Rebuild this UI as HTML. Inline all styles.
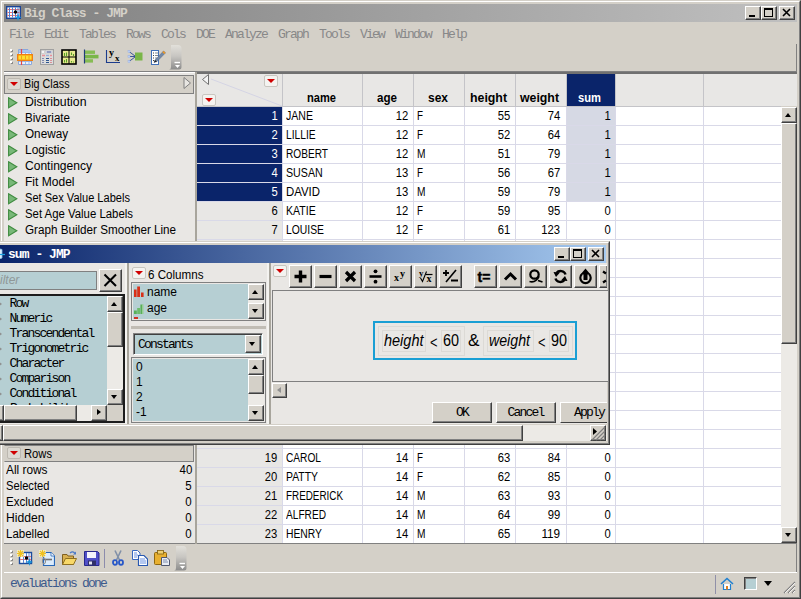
<!DOCTYPE html>
<html><head><meta charset="utf-8"><title>Big Class - JMP</title>
<style>
*{box-sizing:border-box;margin:0;padding:0}
html,body{width:801px;height:599px;overflow:hidden;background:#d4d0c8}
body{position:relative;font-family:"Liberation Sans",sans-serif;font-size:12px;color:#000}
.a{position:absolute}
.mono{font-family:"Liberation Mono",monospace;font-size:13px;letter-spacing:-1.8px;white-space:pre}
.t{position:absolute;white-space:pre;line-height:16px;height:16px}
.r{text-align:right}
.btn{position:absolute;background:#d4d0c8;border:1px solid;border-color:#fff #404040 #404040 #fff;box-shadow:inset -1px -1px 0 #808080}
.sunk{position:absolute;border:1px solid;border-color:#808080 #fff #fff #808080;box-shadow:inset 1px 1px 0 #404040}
.rt{position:absolute;width:14px;height:12px;border:1px solid #bcb8b0;border-radius:2px;background:#dcd9d2}
.rt.w{background:#f4f3f0;border-color:#c8c6c0}
.rt:after{content:"";position:absolute;left:1.5px;top:2.5px;width:0;height:0;border-style:solid;border-color:#d00000 transparent transparent transparent;border-width:4.5px 4.5px 0 4.5px}

.arr{position:absolute;width:0;height:0;border-style:solid}
</style></head><body>
<div class="a" style="left:0px;top:0px;width:801px;height:599px;border:1px solid;border-color:#d4d0c8 #404040 #404040 #d4d0c8"></div>
<div class="a" style="left:1px;top:1px;width:799px;height:597px;border:1px solid;border-color:#fff #808080 #808080 #fff"></div>
<div class="a" style="left:4px;top:4px;width:793px;height:18px;background:linear-gradient(90deg,#808080,#c0c0c0)"></div>
<svg class="a" style="left:6px;top:5px" width="16" height="16" viewBox="0 0 16 16"><rect x="0.7" y="1.700" width="13.600" height="11.600" fill="#fff" stroke="#1c4496" stroke-width="1.4"/><path d="M1.500 4.500H13.500M1.500 7.500H13.500M1.500 10.500H13.500" stroke="#f07070" stroke-width="1"/><path d="M3.500 2.500V12.500M6.500 2.500V12.500M9.500 2.500V12.500M12 2.500V12.500" stroke="#5080d0" stroke-width="1"/><circle cx="9.500" cy="7" r="1.700" fill="#000"/><path d="M12 8L13 11.500L16 12.300L13 13.100L12 16L11 13.100L8.500 12.300L11 11.500Z" fill="#1898e0"/></svg>
<div class="t mono" style="left:24px;top:6px;font-weight:bold;color:#d4d0c8;letter-spacing:-0.95px">Big Class - JMP</div>
<div class="btn" style="left:745px;top:6px;width:16px;height:14px;"></div>
<div class="a" style="left:749px;top:15px;width:6px;height:2px;background:#000"></div>
<div class="btn" style="left:761px;top:6px;width:16px;height:14px;"></div>
<div class="a" style="left:764px;top:8px;width:9px;height:9px;border:1px solid #000;border-top-width:2px"></div>
<div class="btn" style="left:779px;top:6px;width:16px;height:14px;"></div>
<svg class="a" style="left:782px;top:8px" width="10" height="10" viewBox="0 0 10 10"><path d="M1 1L8 8M8 1L1 8" stroke="#000" stroke-width="1.6"/></svg>
<div class="t mono" style="left:9px;top:27px;color:#888">File</div>
<div class="t mono" style="left:44px;top:27px;color:#888">Edit</div>
<div class="t mono" style="left:79px;top:27px;color:#888">Tables</div>
<div class="t mono" style="left:126px;top:27px;color:#888">Rows</div>
<div class="t mono" style="left:161px;top:27px;color:#888">Cols</div>
<div class="t mono" style="left:196px;top:27px;color:#888">DOE</div>
<div class="t mono" style="left:225px;top:27px;color:#888">Analyze</div>
<div class="t mono" style="left:278px;top:27px;color:#888">Graph</div>
<div class="t mono" style="left:319px;top:27px;color:#888">Tools</div>
<div class="t mono" style="left:360px;top:27px;color:#888">View</div>
<div class="t mono" style="left:395px;top:27px;color:#888">Window</div>
<div class="t mono" style="left:442px;top:27px;color:#888">Help</div>
<div class="a" style="left:10px;top:49px;width:2px;height:2px;background:#fff;box-shadow:1px 1px 0 #8a8a8a"></div>
<div class="a" style="left:10px;top:53px;width:2px;height:2px;background:#fff;box-shadow:1px 1px 0 #8a8a8a"></div>
<div class="a" style="left:10px;top:57px;width:2px;height:2px;background:#fff;box-shadow:1px 1px 0 #8a8a8a"></div>
<div class="a" style="left:10px;top:61px;width:2px;height:2px;background:#fff;box-shadow:1px 1px 0 #8a8a8a"></div>
<svg class="a" style="left:17px;top:49px" width="16" height="16" viewBox="0 0 16 16"><path d="M1.5 0.5H11L14.5 4V15.5H1.5Z" fill="#eaf2fc" stroke="#8aa8dc"/><path d="M2 3.5H14M2 12.5H14M8.5 1V15M12 4V15" stroke="#9cb8e8"/><rect x="2" y="1" width="12" height="2" fill="#a8c4f0"/><path d="M4.5 0V16" stroke="#e84848" stroke-width="1.2"/><rect x="0.7" y="5.7" width="14.6" height="5.6" fill="#ffe030" stroke="#f08010" stroke-width="1.4"/><path d="M4.5 6.5V10.5M8.5 6.5V10.5M12 6.5V10.5" stroke="#f0a020"/></svg>
<svg class="a" style="left:39px;top:49px" width="16" height="16" viewBox="0 0 16 16"><rect x="1.5" y="0.5" width="13" height="15" fill="#dcdcdc" stroke="#a0a0a0"/><rect x="2.5" y="1.5" width="3" height="3" fill="#f4f4f4" stroke="#b8b8b8" stroke-width="0.5"/><rect x="6.5" y="1.5" width="7" height="3" fill="#fff" stroke="#b8b8b8" stroke-width="0.5"/><path d="M7.5 3H12.5" stroke="#283880" stroke-width="1"/><path d="M3 6.5H6M11 6.5H13" stroke="#e89098" stroke-width="1.4"/><path d="M7 6.5H10" stroke="#98b0d8" stroke-width="1.4"/><path d="M3.5 9.5h1M3.5 11.5h1M3.5 13.5h1" stroke="#283880" stroke-width="1.2"/><path d="M7 9.5h3M7 11.5h3M7 13.5h3" stroke="#305890" stroke-width="1.2"/><path d="M11.5 9.5h1M11.5 11.5h1M11.5 13.5h1" stroke="#d84050" stroke-width="1.2"/></svg>
<svg class="a" style="left:61px;top:49px" width="16" height="16" viewBox="0 0 16 16"><rect x="1" y="1" width="14" height="14" fill="#eaea90" stroke="#000" stroke-width="1.6"/><path d="M8 1V15M1 8H15" stroke="#000" stroke-width="1"/><path d="M3.5 4v3M5.5 3.5v3.5M10.5 3.5v2.5M12.5 5v2M3.5 11v2.5M5.5 10v3.5M10.5 12v1.5M12.5 12.5v1" stroke="#58a028" stroke-width="1.1"/></svg>
<svg class="a" style="left:83px;top:49px" width="16" height="16" viewBox="0 0 16 16"><rect x="2" y="1.5" width="10" height="3.4" fill="#86bc54"/><rect x="2" y="5.8" width="13.5" height="3.6" fill="#7ab648"/><rect x="2" y="10.2" width="8" height="3.4" fill="#86bc54"/><path d="M1.5 0.5V14.5" stroke="#203c78" stroke-width="1.2"/></svg>
<svg class="a" style="left:105px;top:49px" width="16" height="16" viewBox="0 0 16 16"><path d="M1.5 1V13.5H15" stroke="#1c3c8c" fill="none" stroke-width="1.1"/><text x="4" y="6.5" font-family="Liberation Serif,serif" font-weight="bold" font-size="10" fill="#000">y</text><text x="10" y="12" font-family="Liberation Serif,serif" font-weight="bold" font-size="9" fill="#000">x</text></svg>
<svg class="a" style="left:127px;top:49px" width="16" height="16" viewBox="0 0 16 16"><path d="M2 2.5L8 7M2 7.5H8M2 12.5L8 8" stroke="#284890" fill="none" stroke-width="0.9"/><rect x="8" y="3.5" width="7.5" height="8" fill="#7ab648"/><rect x="1" y="1.5" width="2" height="2" fill="#c0d4f8" stroke="#90a8e0" stroke-width="0.4"/><rect x="1" y="6.5" width="2" height="2" fill="#c0d4f8" stroke="#90a8e0" stroke-width="0.4"/><rect x="1" y="11.5" width="2" height="2" fill="#c0d4f8" stroke="#90a8e0" stroke-width="0.4"/></svg>
<svg class="a" style="left:150px;top:49px" width="16" height="16" viewBox="0 0 16 16"><rect x="1.5" y="1.5" width="7" height="14" fill="#fff" stroke="#4070b8"/><path d="M3 4h1M3 6.5h1M3 9h1M3 11.5h1" stroke="#404040"/><path d="M5 4h3M5 6.5h3M5 9h2" stroke="#808890"/><path d="M4 13.5L5 11L13.5 2L15.5 3.8L7 12.6Z" fill="#7088a8" stroke="#506080" stroke-width="0.5"/><path d="M13.5 2L15.5 3.8L14.3 5L12.3 3.2Z" fill="#f09820"/><path d="M4 13.5L5 11L7 12.6Z" fill="#202020"/></svg>
<svg class="a" style="left:169px;top:45px" width="13" height="25" viewBox="0 0 13 25"><defs><linearGradient id="tb169" x1="0" y1="0" x2="0" y2="1"><stop offset="0" stop-color="#e2e0da"/><stop offset="0.45" stop-color="#c8c6c2"/><stop offset="1" stop-color="#8c8c8c"/></linearGradient></defs><path d="M0 0H9Q12.500 0 12.500 3.500V22Q12.500 24.500 10 24.500H0Q2 24.500 2 22V0Z" fill="url(#tb169)"/><path d="M5.500 17.500H11" stroke="#fff" stroke-width="1.4"/><path d="M6 20H11L8.500 23Z" fill="#fff"/></svg>
<div class="a" style="left:4px;top:71px;width:793px;height:1px;background:#808080"></div>
<div class="a" style="left:4px;top:72px;width:193px;height:2px;background:#fff"></div>
<div class="a" style="left:197px;top:72px;width:600px;height:2px;background:#707070"></div>
<div class="a" style="left:796px;top:44px;width:1px;height:27px;background:#808080"></div>
<div class="a" style="left:796px;top:544px;width:1px;height:28px;background:#808080"></div>
<div class="a" style="left:4px;top:73px;width:191px;height:171px;background:#e9e7e4"></div>
<div class="a" style="left:4px;top:75px;width:190px;height:19px;background:#d4d0c8;border:1px solid #808080"></div>
<div class="rt" style="left:7px;top:78px"></div>
<div class="t" style="left:23.5px;top:76px;transform:scaleX(0.898);transform-origin:0 0;">Big Class</div>
<svg class="a" style="left:183px;top:76px" width="9" height="14" viewBox="0 0 9 14"><path d="M1 1.5L7.5 7L1 12.5Z" fill="#e8e6e2" stroke="#808080" stroke-width="1"/></svg>
<svg class="a" style="left:8px;top:97px" width="10" height="12" viewBox="0 0 10 12"><path d="M0.6 0.8L8.8 5.75L0.6 10.7Z" fill="#78b878" stroke="#408c40" stroke-width="1.1"/></svg>
<div class="t" style="left:25px;top:94px;transform:scaleX(1.024);transform-origin:0 0;">Distribution</div>
<svg class="a" style="left:8px;top:113px" width="10" height="12" viewBox="0 0 10 12"><path d="M0.6 0.8L8.8 5.75L0.6 10.7Z" fill="#78b878" stroke="#408c40" stroke-width="1.1"/></svg>
<div class="t" style="left:25px;top:110px;transform:scaleX(0.964);transform-origin:0 0;">Bivariate</div>
<svg class="a" style="left:8px;top:129px" width="10" height="12" viewBox="0 0 10 12"><path d="M0.6 0.8L8.8 5.75L0.6 10.7Z" fill="#78b878" stroke="#408c40" stroke-width="1.1"/></svg>
<div class="t" style="left:25px;top:126px;transform:scaleX(0.977);transform-origin:0 0;">Oneway</div>
<svg class="a" style="left:8px;top:145px" width="10" height="12" viewBox="0 0 10 12"><path d="M0.6 0.8L8.8 5.75L0.6 10.7Z" fill="#78b878" stroke="#408c40" stroke-width="1.1"/></svg>
<div class="t" style="left:25px;top:142px;transform:scaleX(0.995);transform-origin:0 0;">Logistic</div>
<svg class="a" style="left:8px;top:161px" width="10" height="12" viewBox="0 0 10 12"><path d="M0.6 0.8L8.8 5.75L0.6 10.7Z" fill="#78b878" stroke="#408c40" stroke-width="1.1"/></svg>
<div class="t" style="left:25px;top:158px;transform:scaleX(1.004);transform-origin:0 0;">Contingency</div>
<svg class="a" style="left:8px;top:177px" width="10" height="12" viewBox="0 0 10 12"><path d="M0.6 0.8L8.8 5.75L0.6 10.7Z" fill="#78b878" stroke="#408c40" stroke-width="1.1"/></svg>
<div class="t" style="left:25px;top:174px;transform:scaleX(1.003);transform-origin:0 0;">Fit Model</div>
<svg class="a" style="left:8px;top:193px" width="10" height="12" viewBox="0 0 10 12"><path d="M0.6 0.8L8.8 5.75L0.6 10.7Z" fill="#78b878" stroke="#408c40" stroke-width="1.1"/></svg>
<div class="t" style="left:25px;top:190px;transform:scaleX(0.922);transform-origin:0 0;">Set Sex Value Labels</div>
<svg class="a" style="left:8px;top:209px" width="10" height="12" viewBox="0 0 10 12"><path d="M0.6 0.8L8.8 5.75L0.6 10.7Z" fill="#78b878" stroke="#408c40" stroke-width="1.1"/></svg>
<div class="t" style="left:25px;top:206px;transform:scaleX(0.948);transform-origin:0 0;">Set Age Value Labels</div>
<svg class="a" style="left:8px;top:225px" width="10" height="12" viewBox="0 0 10 12"><path d="M0.6 0.8L8.8 5.75L0.6 10.7Z" fill="#78b878" stroke="#408c40" stroke-width="1.1"/></svg>
<div class="t" style="left:25px;top:222px;transform:scaleX(0.972);transform-origin:0 0;">Graph Builder Smoother Line</div>
<div class="a" style="left:194px;top:74px;width:1px;height:470px;background:#e9e7e4"></div>
<div class="a" style="left:195px;top:72px;width:2px;height:472px;background:#a8a59c"></div>
<div class="a" style="left:197px;top:74px;width:584px;height:469px;background:#fff"></div>
<div class="a" style="left:197px;top:74px;width:600px;height:32px;background:#e8e7e5"></div>
<div class="a" style="left:197px;top:106px;width:85px;height:437px;background:#e8e7e5"></div>
<div class="a" style="left:197px;top:107px;width:85px;height:18px;background:#0a246a"></div>
<div class="a" style="left:567px;top:107px;width:49px;height:18px;background:#d6d9e4"></div>
<div class="a" style="left:197px;top:126px;width:85px;height:18px;background:#0a246a"></div>
<div class="a" style="left:567px;top:126px;width:49px;height:18px;background:#d6d9e4"></div>
<div class="a" style="left:197px;top:145px;width:85px;height:18px;background:#0a246a"></div>
<div class="a" style="left:567px;top:145px;width:49px;height:18px;background:#d6d9e4"></div>
<div class="a" style="left:197px;top:164px;width:85px;height:18px;background:#0a246a"></div>
<div class="a" style="left:567px;top:164px;width:49px;height:18px;background:#d6d9e4"></div>
<div class="a" style="left:197px;top:183px;width:85px;height:18px;background:#0a246a"></div>
<div class="a" style="left:567px;top:183px;width:49px;height:18px;background:#d6d9e4"></div>
<div class="a" style="left:567px;top:74px;width:48px;height:32px;background:#0a246a"></div>
<div class="a" style="left:282px;top:74px;width:1px;height:32px;background:#c4c4c8"></div>
<div class="a" style="left:282px;top:106px;width:1px;height:437px;background:#d9d9e8"></div>
<div class="a" style="left:362px;top:74px;width:1px;height:32px;background:#c4c4c8"></div>
<div class="a" style="left:362px;top:106px;width:1px;height:437px;background:#d9d9e8"></div>
<div class="a" style="left:413px;top:74px;width:1px;height:32px;background:#c4c4c8"></div>
<div class="a" style="left:413px;top:106px;width:1px;height:437px;background:#d9d9e8"></div>
<div class="a" style="left:464px;top:74px;width:1px;height:32px;background:#c4c4c8"></div>
<div class="a" style="left:464px;top:106px;width:1px;height:437px;background:#d9d9e8"></div>
<div class="a" style="left:515px;top:74px;width:1px;height:32px;background:#c4c4c8"></div>
<div class="a" style="left:515px;top:106px;width:1px;height:437px;background:#d9d9e8"></div>
<div class="a" style="left:566px;top:74px;width:1px;height:32px;background:#c4c4c8"></div>
<div class="a" style="left:566px;top:106px;width:1px;height:437px;background:#d9d9e8"></div>
<div class="a" style="left:615px;top:74px;width:1px;height:32px;background:#c4c4c8"></div>
<div class="a" style="left:615px;top:106px;width:1px;height:437px;background:#d9d9e8"></div>
<div class="a" style="left:703px;top:74px;width:1px;height:32px;background:#c4c4c8"></div>
<div class="a" style="left:703px;top:106px;width:1px;height:437px;background:#d9d9e8"></div>
<div class="a" style="left:197px;top:106px;width:584px;height:1px;background:#c4c4c8"></div>
<div class="a" style="left:197px;top:125px;width:584px;height:1px;background:#d9d9e8"></div>
<div class="a" style="left:197px;top:144px;width:584px;height:1px;background:#d9d9e8"></div>
<div class="a" style="left:197px;top:163px;width:584px;height:1px;background:#d9d9e8"></div>
<div class="a" style="left:197px;top:182px;width:584px;height:1px;background:#d9d9e8"></div>
<div class="a" style="left:197px;top:201px;width:584px;height:1px;background:#d9d9e8"></div>
<div class="a" style="left:197px;top:220px;width:584px;height:1px;background:#d9d9e8"></div>
<div class="a" style="left:197px;top:239px;width:584px;height:1px;background:#d9d9e8"></div>
<div class="a" style="left:197px;top:258px;width:584px;height:1px;background:#d9d9e8"></div>
<div class="a" style="left:197px;top:277px;width:584px;height:1px;background:#d9d9e8"></div>
<div class="a" style="left:197px;top:296px;width:584px;height:1px;background:#d9d9e8"></div>
<div class="a" style="left:197px;top:315px;width:584px;height:1px;background:#d9d9e8"></div>
<div class="a" style="left:197px;top:334px;width:584px;height:1px;background:#d9d9e8"></div>
<div class="a" style="left:197px;top:353px;width:584px;height:1px;background:#d9d9e8"></div>
<div class="a" style="left:197px;top:372px;width:584px;height:1px;background:#d9d9e8"></div>
<div class="a" style="left:197px;top:391px;width:584px;height:1px;background:#d9d9e8"></div>
<div class="a" style="left:197px;top:410px;width:584px;height:1px;background:#d9d9e8"></div>
<div class="a" style="left:197px;top:429px;width:584px;height:1px;background:#d9d9e8"></div>
<div class="a" style="left:197px;top:448px;width:584px;height:1px;background:#d9d9e8"></div>
<div class="a" style="left:197px;top:467px;width:584px;height:1px;background:#d9d9e8"></div>
<div class="a" style="left:197px;top:486px;width:584px;height:1px;background:#d9d9e8"></div>
<div class="a" style="left:197px;top:505px;width:584px;height:1px;background:#d9d9e8"></div>
<div class="a" style="left:197px;top:524px;width:584px;height:1px;background:#d9d9e8"></div>
<div class="a" style="left:197px;top:543px;width:584px;height:1px;background:#d9d9e8"></div>
<div class="t" style="left:306.5px;top:90px;transform:scaleX(0.925);transform-origin:0 0;font-weight:bold;color:#000">name</div>
<div class="t" style="left:376.5px;top:90px;transform:scaleX(0.967);transform-origin:0 0;font-weight:bold;color:#000">age</div>
<div class="t" style="left:427.5px;top:90px;transform:scaleX(0.998);transform-origin:0 0;font-weight:bold;color:#000">sex</div>
<div class="t" style="left:470.0px;top:90px;transform:scaleX(1.028);transform-origin:0 0;font-weight:bold;color:#000">height</div>
<div class="t" style="left:520.0px;top:90px;transform:scaleX(1.026);transform-origin:0 0;font-weight:bold;color:#000">weight</div>
<div class="t" style="left:578.0px;top:90px;transform:scaleX(0.932);transform-origin:0 0;font-weight:bold;color:#fff">sum</div>
<svg class="a" style="left:197px;top:73px" width="85" height="33" viewBox="0 0 85 33"><path d="M14 6L85 33" stroke="#d4d4e4" stroke-width="1"/><path d="M11.5 1.5L5.5 6.5L11.5 11.5Z" fill="#f4f4f4" stroke="#707070" stroke-width="1"/></svg>
<div class="rt w" style="left:264px;top:75px"></div>
<div class="rt w" style="left:202px;top:94px"></div>
<div class="t r" style="right:523.5px;top:108px;transform:scaleX(0.935);transform-origin:100% 0;color:#fff">1</div>
<div class="t" style="left:286px;top:108px;transform:scaleX(0.880);transform-origin:0 0;">JANE</div>
<div class="t r" style="right:393px;top:108px;transform:scaleX(0.936);transform-origin:100% 0;">12</div>
<div class="t" style="left:417px;top:108px;transform:scaleX(0.817);transform-origin:0 0;">F</div>
<div class="t r" style="right:291px;top:108px;transform:scaleX(0.936);transform-origin:100% 0;">55</div>
<div class="t r" style="right:240.5px;top:108px;transform:scaleX(0.936);transform-origin:100% 0;">74</div>
<div class="t r" style="right:190.5px;top:108px;transform:scaleX(0.935);transform-origin:100% 0;">1</div>
<div class="t r" style="right:523.5px;top:127px;transform:scaleX(0.935);transform-origin:100% 0;color:#fff">2</div>
<div class="t" style="left:286px;top:127px;transform:scaleX(0.856);transform-origin:0 0;">LILLIE</div>
<div class="t r" style="right:393px;top:127px;transform:scaleX(0.936);transform-origin:100% 0;">12</div>
<div class="t" style="left:417px;top:127px;transform:scaleX(0.817);transform-origin:0 0;">F</div>
<div class="t r" style="right:291px;top:127px;transform:scaleX(0.936);transform-origin:100% 0;">52</div>
<div class="t r" style="right:240.5px;top:127px;transform:scaleX(0.936);transform-origin:100% 0;">64</div>
<div class="t r" style="right:190.5px;top:127px;transform:scaleX(0.935);transform-origin:100% 0;">1</div>
<div class="t r" style="right:523.5px;top:146px;transform:scaleX(0.935);transform-origin:100% 0;color:#fff">3</div>
<div class="t" style="left:286px;top:146px;transform:scaleX(0.843);transform-origin:0 0;">ROBERT</div>
<div class="t r" style="right:393px;top:146px;transform:scaleX(0.936);transform-origin:100% 0;">12</div>
<div class="t" style="left:417px;top:146px;transform:scaleX(0.850);transform-origin:0 0;">M</div>
<div class="t r" style="right:291px;top:146px;transform:scaleX(0.936);transform-origin:100% 0;">51</div>
<div class="t r" style="right:240.5px;top:146px;transform:scaleX(0.936);transform-origin:100% 0;">79</div>
<div class="t r" style="right:190.5px;top:146px;transform:scaleX(0.935);transform-origin:100% 0;">1</div>
<div class="t r" style="right:523.5px;top:165px;transform:scaleX(0.935);transform-origin:100% 0;color:#fff">4</div>
<div class="t" style="left:286px;top:165px;transform:scaleX(0.888);transform-origin:0 0;">SUSAN</div>
<div class="t r" style="right:393px;top:165px;transform:scaleX(0.936);transform-origin:100% 0;">13</div>
<div class="t" style="left:417px;top:165px;transform:scaleX(0.817);transform-origin:0 0;">F</div>
<div class="t r" style="right:291px;top:165px;transform:scaleX(0.936);transform-origin:100% 0;">56</div>
<div class="t r" style="right:240.5px;top:165px;transform:scaleX(0.936);transform-origin:100% 0;">67</div>
<div class="t r" style="right:190.5px;top:165px;transform:scaleX(0.935);transform-origin:100% 0;">1</div>
<div class="t r" style="right:523.5px;top:184px;transform:scaleX(0.935);transform-origin:100% 0;color:#fff">5</div>
<div class="t" style="left:286px;top:184px;transform:scaleX(0.950);transform-origin:0 0;">DAVID</div>
<div class="t r" style="right:393px;top:184px;transform:scaleX(0.936);transform-origin:100% 0;">13</div>
<div class="t" style="left:417px;top:184px;transform:scaleX(0.850);transform-origin:0 0;">M</div>
<div class="t r" style="right:291px;top:184px;transform:scaleX(0.936);transform-origin:100% 0;">59</div>
<div class="t r" style="right:240.5px;top:184px;transform:scaleX(0.936);transform-origin:100% 0;">79</div>
<div class="t r" style="right:190.5px;top:184px;transform:scaleX(0.935);transform-origin:100% 0;">1</div>
<div class="t r" style="right:523.5px;top:203px;transform:scaleX(0.935);transform-origin:100% 0;">6</div>
<div class="t" style="left:286px;top:203px;transform:scaleX(0.879);transform-origin:0 0;">KATIE</div>
<div class="t r" style="right:393px;top:203px;transform:scaleX(0.936);transform-origin:100% 0;">12</div>
<div class="t" style="left:417px;top:203px;transform:scaleX(0.817);transform-origin:0 0;">F</div>
<div class="t r" style="right:291px;top:203px;transform:scaleX(0.936);transform-origin:100% 0;">59</div>
<div class="t r" style="right:240.5px;top:203px;transform:scaleX(0.936);transform-origin:100% 0;">95</div>
<div class="t r" style="right:190.5px;top:203px;transform:scaleX(0.935);transform-origin:100% 0;">0</div>
<div class="t r" style="right:523.5px;top:222px;transform:scaleX(0.935);transform-origin:100% 0;">7</div>
<div class="t" style="left:286px;top:222px;transform:scaleX(0.863);transform-origin:0 0;">LOUISE</div>
<div class="t r" style="right:393px;top:222px;transform:scaleX(0.936);transform-origin:100% 0;">12</div>
<div class="t" style="left:417px;top:222px;transform:scaleX(0.817);transform-origin:0 0;">F</div>
<div class="t r" style="right:291px;top:222px;transform:scaleX(0.936);transform-origin:100% 0;">61</div>
<div class="t r" style="right:240.5px;top:222px;transform:scaleX(0.936);transform-origin:100% 0;">123</div>
<div class="t r" style="right:190.5px;top:222px;transform:scaleX(0.935);transform-origin:100% 0;">0</div>
<div class="t r" style="right:523.5px;top:450px;transform:scaleX(0.936);transform-origin:100% 0;">19</div>
<div class="t" style="left:286px;top:450px;transform:scaleX(0.847);transform-origin:0 0;">CAROL</div>
<div class="t r" style="right:393px;top:450px;transform:scaleX(0.936);transform-origin:100% 0;">14</div>
<div class="t" style="left:417px;top:450px;transform:scaleX(0.817);transform-origin:0 0;">F</div>
<div class="t r" style="right:291px;top:450px;transform:scaleX(0.936);transform-origin:100% 0;">63</div>
<div class="t r" style="right:240.5px;top:450px;transform:scaleX(0.936);transform-origin:100% 0;">84</div>
<div class="t r" style="right:190.5px;top:450px;transform:scaleX(0.935);transform-origin:100% 0;">0</div>
<div class="t r" style="right:523.5px;top:469px;transform:scaleX(0.936);transform-origin:100% 0;">20</div>
<div class="t" style="left:286px;top:469px;transform:scaleX(0.867);transform-origin:0 0;">PATTY</div>
<div class="t r" style="right:393px;top:469px;transform:scaleX(0.936);transform-origin:100% 0;">14</div>
<div class="t" style="left:417px;top:469px;transform:scaleX(0.817);transform-origin:0 0;">F</div>
<div class="t r" style="right:291px;top:469px;transform:scaleX(0.936);transform-origin:100% 0;">62</div>
<div class="t r" style="right:240.5px;top:469px;transform:scaleX(0.936);transform-origin:100% 0;">85</div>
<div class="t r" style="right:190.5px;top:469px;transform:scaleX(0.935);transform-origin:100% 0;">0</div>
<div class="t r" style="right:523.5px;top:488px;transform:scaleX(0.936);transform-origin:100% 0;">21</div>
<div class="t" style="left:286px;top:488px;transform:scaleX(0.822);transform-origin:0 0;">FREDERICK</div>
<div class="t r" style="right:393px;top:488px;transform:scaleX(0.936);transform-origin:100% 0;">14</div>
<div class="t" style="left:417px;top:488px;transform:scaleX(0.850);transform-origin:0 0;">M</div>
<div class="t r" style="right:291px;top:488px;transform:scaleX(0.936);transform-origin:100% 0;">63</div>
<div class="t r" style="right:240.5px;top:488px;transform:scaleX(0.936);transform-origin:100% 0;">93</div>
<div class="t r" style="right:190.5px;top:488px;transform:scaleX(0.935);transform-origin:100% 0;">0</div>
<div class="t r" style="right:523.5px;top:507px;transform:scaleX(0.936);transform-origin:100% 0;">22</div>
<div class="t" style="left:286px;top:507px;transform:scaleX(0.845);transform-origin:0 0;">ALFRED</div>
<div class="t r" style="right:393px;top:507px;transform:scaleX(0.936);transform-origin:100% 0;">14</div>
<div class="t" style="left:417px;top:507px;transform:scaleX(0.850);transform-origin:0 0;">M</div>
<div class="t r" style="right:291px;top:507px;transform:scaleX(0.936);transform-origin:100% 0;">64</div>
<div class="t r" style="right:240.5px;top:507px;transform:scaleX(0.936);transform-origin:100% 0;">99</div>
<div class="t r" style="right:190.5px;top:507px;transform:scaleX(0.935);transform-origin:100% 0;">0</div>
<div class="t r" style="right:523.5px;top:526px;transform:scaleX(0.936);transform-origin:100% 0;">23</div>
<div class="t" style="left:286px;top:526px;transform:scaleX(0.861);transform-origin:0 0;">HENRY</div>
<div class="t r" style="right:393px;top:526px;transform:scaleX(0.936);transform-origin:100% 0;">14</div>
<div class="t" style="left:417px;top:526px;transform:scaleX(0.850);transform-origin:0 0;">M</div>
<div class="t r" style="right:291px;top:526px;transform:scaleX(0.936);transform-origin:100% 0;">65</div>
<div class="t r" style="right:240.5px;top:526px;transform:scaleX(0.980);transform-origin:100% 0;">119</div>
<div class="t r" style="right:190.5px;top:526px;transform:scaleX(0.935);transform-origin:100% 0;">0</div>
<div class="a" style="left:781px;top:107px;width:16px;height:436px;background:#eceae6"></div>
<div class="btn" style="left:781px;top:107px;width:16px;height:16px;"></div>
<div class="arr" style="left:785.0px;top:112.5px;border-color:transparent transparent #000 transparent;border-width:0 3.5px 4px 3.5px"></div>
<div class="btn" style="left:781px;top:123px;width:16px;height:221px;"></div>
<div class="btn" style="left:781px;top:527px;width:16px;height:16px;"></div>
<div class="arr" style="left:785.0px;top:533.0px;border-color:#000 transparent transparent transparent;border-width:4px 3.5px 0 3.5px"></div>
<div class="a" style="left:197px;top:543px;width:600px;height:1px;background:#808080"></div>
<div class="a" style="left:4px;top:444px;width:190px;height:99px;background:#e9e7e4"></div>
<div class="a" style="left:4px;top:445px;width:190px;height:17px;background:#d4d0c8;border:1px solid #808080;border-left-color:#d4d0c8"></div>
<div class="rt" style="left:7px;top:447px"></div>
<div class="t" style="left:23.5px;top:446px;transform:scaleX(0.933);transform-origin:0 0;">Rows</div>
<div class="t" style="left:6px;top:462px;transform:scaleX(0.988);transform-origin:0 0;">All rows</div>
<div class="t r" style="right:609px;top:462px;transform:scaleX(0.958);transform-origin:100% 0;">40</div>
<div class="t" style="left:6px;top:478px;transform:scaleX(0.931);transform-origin:0 0;">Selected</div>
<div class="t r" style="right:609px;top:478px;transform:scaleX(0.957);transform-origin:100% 0;">5</div>
<div class="t" style="left:6px;top:494px;transform:scaleX(0.962);transform-origin:0 0;">Excluded</div>
<div class="t r" style="right:609px;top:494px;transform:scaleX(0.957);transform-origin:100% 0;">0</div>
<div class="t" style="left:6px;top:510px;transform:scaleX(1.012);transform-origin:0 0;">Hidden</div>
<div class="t r" style="right:609px;top:510px;transform:scaleX(0.957);transform-origin:100% 0;">0</div>
<div class="t" style="left:6px;top:526px;transform:scaleX(0.959);transform-origin:0 0;">Labelled</div>
<div class="t r" style="right:609px;top:526px;transform:scaleX(0.957);transform-origin:100% 0;">0</div>
<div class="a" style="left:4px;top:543px;width:191px;height:1px;background:#808080"></div>
<div class="a" style="left:10px;top:550px;width:2px;height:2px;background:#fff;box-shadow:1px 1px 0 #8a8a8a"></div>
<div class="a" style="left:10px;top:554px;width:2px;height:2px;background:#fff;box-shadow:1px 1px 0 #8a8a8a"></div>
<div class="a" style="left:10px;top:558px;width:2px;height:2px;background:#fff;box-shadow:1px 1px 0 #8a8a8a"></div>
<div class="a" style="left:10px;top:562px;width:2px;height:2px;background:#fff;box-shadow:1px 1px 0 #8a8a8a"></div>
<svg class="a" style="left:17px;top:550px" width="16" height="16" viewBox="0 0 16 16"><rect x="2.5" y="2.5" width="12" height="11" fill="#fff" stroke="#1c4c9c" stroke-width="1.4"/><path d="M3 6.5H14M3 9.5H14" stroke="#e87878"/><path d="M6.5 3V13M9.5 3V13M12 3V13" stroke="#6088d0"/><rect x="0" y="0" width="7" height="7" fill="#fff8c0" opacity="0.7"/><path d="M0 3.5h7M3.5 0v7M1 1l5 5M6 1l-5 5" stroke="#f0c020" stroke-width="1.1"/><circle cx="9.5" cy="8" r="1.7" fill="#000"/><path d="M12.5 8L13.4 11.1L16 12L13.4 12.9L12.5 16L11.6 12.9L8.5 12L11.6 11.1Z" fill="#1890d8"/></svg>
<svg class="a" style="left:39px;top:550px" width="16" height="16" viewBox="0 0 16 16"><path d="M4.500 2.500H12L15.500 6V15.500H4.500Z" fill="#dcecfc" stroke="#2868b8" stroke-width="1.2"/><path d="M12 2.500V6H15.500" fill="#fff" stroke="#2868b8" stroke-width="0.8"/><rect x="0" y="0" width="7" height="7" fill="#fff8c0" opacity="0.7"/><path d="M0 3.500h7M3.500 0v7M1 1l5 5M6 1l-5 5" stroke="#f0c020" stroke-width="1.1"/><path d="M5 9.500H13" stroke="#707070" stroke-width="1.6"/><ellipse cx="5" cy="11" rx="1.600" ry="3" fill="none" stroke="#909090" stroke-width="1"/></svg>
<svg class="a" style="left:61px;top:550px" width="16" height="16" viewBox="0 0 16 16"><path d="M1.500 4.500H6L7 6H12.500V14.500H1.500Z" fill="#d8b050" stroke="#806020"/><path d="M1.500 14.500L4.500 8.500H15.500L12.500 14.500Z" fill="#f8d868" stroke="#907020"/><path d="M9 3Q12 0.500 14 3.500" stroke="#4878c8" fill="none" stroke-width="1.2"/><path d="M15 1.500V4.500H12Z" fill="#4878c8"/></svg>
<svg class="a" style="left:84px;top:550px" width="16" height="16" viewBox="0 0 16 16"><path d="M0.500 1.500H13.500L15 3V15.500H0.500Z" fill="#5050c8" stroke="#28288c"/><rect x="3" y="2" width="9" height="6" fill="#f4f4fc"/><rect x="4" y="10.500" width="8" height="5" fill="#303068"/><rect x="5" y="11.500" width="3" height="3" fill="#e0e0f0"/></svg>
<div class="a" style="left:104px;top:549px;width:1px;height:19px;background:#8c8cac"></div>
<svg class="a" style="left:110px;top:550px" width="16" height="16" viewBox="0 0 16 16"><path d="M5 0.500L9.500 10M11 0.500L6.500 10" stroke="#8090a8" stroke-width="1.6" fill="none"/><ellipse cx="5" cy="12.500" rx="2" ry="2.300" fill="none" stroke="#2858c8" stroke-width="1.8"/><ellipse cx="11" cy="12.500" rx="2" ry="2.300" fill="none" stroke="#2858c8" stroke-width="1.8"/></svg>
<svg class="a" style="left:132px;top:550px" width="16" height="16" viewBox="0 0 16 16"><path d="M0.500 0.500H5.500L8 3V9.500H0.500Z" fill="#fff" stroke="#3868c0"/><path d="M6.500 5.500H12L15.500 9V15.500H6.500Z" fill="#fff" stroke="#2858b0" stroke-width="1.2"/><path d="M2 3h3M2 5h4M2 7h3M8 9h5M8 11h6M8 13h6" stroke="#6890e0"/></svg>
<svg class="a" style="left:154px;top:550px" width="16" height="16" viewBox="0 0 16 16"><rect x="0.500" y="2.500" width="12" height="12" rx="1" fill="#e8b030" stroke="#906810"/><rect x="3.500" y="0.500" width="6" height="3.500" fill="#f0d070" stroke="#806010" stroke-width="0.8"/><path d="M7.500 7.500H13L15.500 10V15.500H7.500Z" fill="#e8ecf4" stroke="#505870"/><path d="M9 10h4M9 12h5" stroke="#8090b0"/></svg>
<svg class="a" style="left:174px;top:546px" width="13" height="25" viewBox="0 0 13 25"><defs><linearGradient id="tb174" x1="0" y1="0" x2="0" y2="1"><stop offset="0" stop-color="#e2e0da"/><stop offset="0.45" stop-color="#c8c6c2"/><stop offset="1" stop-color="#8c8c8c"/></linearGradient></defs><path d="M0 0H9Q12.500 0 12.500 3.500V22Q12.500 24.500 10 24.500H0Q2 24.500 2 22V0Z" fill="url(#tb174)"/><path d="M5.500 17.500H11" stroke="#fff" stroke-width="1.4"/><path d="M6 20H11L8.500 23Z" fill="#fff"/></svg>
<div class="a" style="left:4px;top:572px;width:793px;height:1px;background:#fff"></div>
<div class="t mono" style="left:10px;top:576px;color:#3c5a8c">evaluations done</div>
<div class="a" style="left:715px;top:575px;width:1px;height:19px;background:#9090a8"></div>
<svg class="a" style="left:720px;top:577px" width="14" height="14" viewBox="0 0 14 14"><path d="M1 7L7 1.5L13 7" stroke="#2080d0" stroke-width="1.6" fill="none"/><path d="M3.5 7V12.5H10.5V7" fill="#fff" stroke="#2080d0" stroke-width="1.2"/><rect x="6" y="9" width="2" height="3.5" fill="#e08020"/></svg>
<div class="a" style="left:744px;top:577px;width:13px;height:13px;border:1px solid;border-color:#404040 #fff #fff #404040;background:#b6cfd3;box-shadow:inset 1px 1px 0 #808080"></div>
<div class="arr" style="left:764px;top:581px;border-color:#000 transparent transparent transparent;border-width:5px 4px 0 4px"></div>
<svg class="a" style="left:783px;top:581px" width="13" height="13" viewBox="0 0 13 13"><path d="M12 1L1 12M12 5L5 12M12 9L9 12" stroke="#808080" stroke-width="1.2"/><path d="M12 2L2 12M12 6L6 12M12 10L10 12" stroke="#fff" stroke-width="0.8"/></svg>
<!--DIALOG-->
<div class="a" style="left:-3px;top:241px;width:613px;height:204px;background:#d4d0c8;border:1px solid;border-color:#d4d0c8 #404040 #404040 #d4d0c8"></div>
<div class="a" style="left:-2px;top:242px;width:611px;height:202px;border:1px solid;border-color:#fff #808080 #808080 #fff"></div>
<div class="a" style="left:0px;top:245px;width:606px;height:18px;background:linear-gradient(90deg,#0a246a,#a6caf0)"></div>
<svg class="a" style="left:-10px;top:247px" width="16" height="14" viewBox="0 0 16 14"><path d="M6 1L12 2.500V11L6 13Z" fill="#dceefc" stroke="#8cc4ec" stroke-width="0.8"/><path d="M9 7.500H15" stroke="#18a0e0" stroke-width="1.2"/></svg>
<div class="t mono" style="left:8px;top:247px;font-weight:bold;color:#fff;letter-spacing:-0.95px">sum - JMP</div>
<div class="btn" style="left:554px;top:247px;width:16px;height:14px;"></div>
<div class="a" style="left:558px;top:256px;width:6px;height:2px;background:#000"></div>
<div class="btn" style="left:570px;top:247px;width:16px;height:14px;"></div>
<div class="a" style="left:573px;top:249px;width:9px;height:9px;border:1px solid #000;border-top-width:2px"></div>
<div class="btn" style="left:588px;top:247px;width:16px;height:14px;"></div>
<svg class="a" style="left:591px;top:249px" width="10" height="10" viewBox="0 0 10 10"><path d="M1 1L8 8M8 1L1 8" stroke="#000" stroke-width="1.6"/></svg>
<div class="a" style="left:0px;top:263px;width:125px;height:161px;background:#e9e7e4"></div>
<div class="a" style="left:129px;top:263px;width:138px;height:161px;background:#e9e7e4"></div>
<div class="a" style="left:271px;top:263px;width:336px;height:161px;background:#e9e7e4"></div>
<div class="a" style="left:125px;top:263px;width:2px;height:161px;background:#f4f3f0"></div>
<div class="a" style="left:127px;top:263px;width:2px;height:161px;background:#a8a59c"></div>
<div class="a" style="left:267px;top:263px;width:2px;height:161px;background:#f4f3f0"></div>
<div class="a" style="left:269px;top:263px;width:2px;height:161px;background:#a8a59c"></div>
<div class="a" style="left:-2px;top:271px;width:99px;height:19px;background:#b6cfd3;border:1px solid #808080"></div>
<div class="t" style="left:0px;top:272px;color:#909898;font-style:italic">ilter</div>
<div class="btn" style="left:99px;top:269px;width:23px;height:23px;"></div>
<svg class="a" style="left:103px;top:273px" width="15" height="15" viewBox="0 0 15 15"><path d="M1.5 1.5L13 13M13 1.5L1.5 13" stroke="#000" stroke-width="2.1"/></svg>
<div class="a" style="left:-2px;top:294px;width:127px;height:129px;background:#b6cfd3;border:2px solid #1c1c1c"></div>
<div class="t mono" style="left:9.5px;top:296px;">Row</div>
<div class="arr" style="left:-2px;top:301px;border-color:transparent transparent transparent #909090;border-width:3px 0 3px 4px"></div>
<div class="t mono" style="left:9.5px;top:311px;">Numeric</div>
<div class="arr" style="left:-2px;top:316px;border-color:transparent transparent transparent #909090;border-width:3px 0 3px 4px"></div>
<div class="t mono" style="left:9.5px;top:326px;">Transcendental</div>
<div class="arr" style="left:-2px;top:331px;border-color:transparent transparent transparent #909090;border-width:3px 0 3px 4px"></div>
<div class="t mono" style="left:9.5px;top:341px;">Trigonometric</div>
<div class="arr" style="left:-2px;top:346px;border-color:transparent transparent transparent #909090;border-width:3px 0 3px 4px"></div>
<div class="t mono" style="left:9.5px;top:356px;">Character</div>
<div class="arr" style="left:-2px;top:361px;border-color:transparent transparent transparent #909090;border-width:3px 0 3px 4px"></div>
<div class="t mono" style="left:9.5px;top:371px;">Comparison</div>
<div class="arr" style="left:-2px;top:376px;border-color:transparent transparent transparent #909090;border-width:3px 0 3px 4px"></div>
<div class="t mono" style="left:9.5px;top:386px;">Conditional</div>
<div class="arr" style="left:-2px;top:391px;border-color:transparent transparent transparent #909090;border-width:3px 0 3px 4px"></div>
<div class="a mono" style="left:10px;top:401px;height:5px;overflow:hidden;line-height:16px">Probability</div>
<div class="a" style="left:107px;top:296px;width:16px;height:109px;background:#eceae6"></div>
<div class="btn" style="left:107px;top:296px;width:16px;height:16px;"></div>
<div class="arr" style="left:111.0px;top:301.5px;border-color:transparent transparent #000 transparent;border-width:0 3.5px 4px 3.5px"></div>
<div class="btn" style="left:107px;top:312px;width:16px;height:35px;"></div>
<div class="btn" style="left:107px;top:389px;width:16px;height:16px;"></div>
<div class="arr" style="left:111.0px;top:395.0px;border-color:#000 transparent transparent transparent;border-width:4px 3.5px 0 3.5px"></div>
<div class="a" style="left:0px;top:405px;width:123px;height:16px;background:#eceae6"></div>
<div class="btn" style="left:-10px;top:405px;width:14px;height:16px;"></div>
<div class="btn" style="left:4px;top:405px;width:73px;height:16px;"></div>
<div class="btn" style="left:91px;top:405px;width:16px;height:16px;"></div>
<div class="arr" style="left:97.0px;top:409.0px;border-color:transparent transparent transparent #000;border-width:3.5px 0 3.5px 4px"></div>
<div class="a" style="left:107px;top:405px;width:16px;height:16px;background:#d4d0c8"></div>
<div class="rt w" style="left:132px;top:267px"></div>
<div class="t" style="left:148px;top:267px;transform:scaleX(0.968);transform-origin:0 0;">6 Columns</div>
<div class="a" style="left:131px;top:282px;width:135px;height:39px;background:#b6cfd3;border:1px solid #808080;box-shadow:inset 0 0 0 1px #e9e7e4"></div>
<svg class="a" style="left:134px;top:286px" width="11" height="12" viewBox="0 0 11 12"><rect x="0" y="3.500" width="2.600" height="7.500" fill="#d83018"/><rect x="3.200" y="0.500" width="2.800" height="10.500" fill="#d83018"/><rect x="7" y="6.500" width="2.600" height="4.500" fill="#d83018"/></svg>
<div class="t" style="left:147px;top:284px;">name</div>
<svg class="a" style="left:134px;top:302px" width="11" height="12" viewBox="0 0 11 12"><rect x="0" y="8.500" width="2.800" height="3.500" fill="#58b058"/><rect x="3.200" y="6" width="2.800" height="6" fill="#6cbc6c"/><rect x="6.400" y="2.500" width="3" height="9.500" fill="#58b058"/><path d="M8.900 2.500V12" stroke="#d8ecd8" stroke-width="0.8"/></svg>
<div class="t" style="left:147px;top:300px;">age</div>
<div class="a" style="left:134px;top:317px;width:4px;height:2px;background:#d03020"></div>
<div class="a" style="left:248px;top:284px;width:16px;height:35px;background:#eceae6"></div>
<div class="btn" style="left:248px;top:284px;width:16px;height:16px;"></div>
<div class="arr" style="left:252.0px;top:289.5px;border-color:transparent transparent #000 transparent;border-width:0 3.5px 4px 3.5px"></div>
<div class="btn" style="left:248px;top:303px;width:16px;height:16px;"></div>
<div class="arr" style="left:252.0px;top:309.0px;border-color:#000 transparent transparent transparent;border-width:4px 3.5px 0 3.5px"></div>
<div class="a" style="left:131px;top:326px;width:135px;height:3px;background:#c0bcb4"></div>
<div class="sunk" style="left:133px;top:333px;width:130px;height:22px;background:#b6cfd3"></div>
<div class="t mono" style="left:138px;top:337px;">Constants</div>
<div class="btn" style="left:245px;top:335px;width:16px;height:18px;"></div>
<div class="arr" style="left:249.0px;top:342.0px;border-color:#000 transparent transparent transparent;border-width:4px 3.5px 0 3.5px"></div>
<div class="a" style="left:131px;top:357px;width:135px;height:66px;background:#b6cfd3;border:1px solid #808080;box-shadow:inset 0 0 0 1px #e9e7e4"></div>
<div class="t" style="left:136px;top:359px;">0</div>
<div class="t" style="left:136px;top:374px;">1</div>
<div class="t" style="left:136px;top:389px;">2</div>
<div class="t" style="left:136px;top:404px;">-1</div>
<div class="a" style="left:248px;top:359px;width:16px;height:62px;background:#eceae6"></div>
<div class="btn" style="left:248px;top:359px;width:16px;height:16px;"></div>
<div class="arr" style="left:252.0px;top:364.5px;border-color:transparent transparent #000 transparent;border-width:0 3.5px 4px 3.5px"></div>
<div class="btn" style="left:248px;top:375px;width:16px;height:19px;"></div>
<div class="btn" style="left:248px;top:405px;width:16px;height:16px;"></div>
<div class="arr" style="left:252.0px;top:411.0px;border-color:#000 transparent transparent transparent;border-width:4px 3.5px 0 3.5px"></div>
<div class="rt w" style="left:273px;top:265px"></div>
<div class="btn" style="left:289px;top:265px;width:23px;height:23px;border-right-width:1"></div>
<div class="btn" style="left:314px;top:265px;width:23px;height:23px;border-right-width:1"></div>
<div class="btn" style="left:339px;top:265px;width:23px;height:23px;border-right-width:1"></div>
<div class="btn" style="left:364px;top:265px;width:23px;height:23px;border-right-width:1"></div>
<div class="btn" style="left:389px;top:265px;width:23px;height:23px;border-right-width:1"></div>
<div class="btn" style="left:414px;top:265px;width:23px;height:23px;border-right-width:1"></div>
<div class="btn" style="left:439px;top:265px;width:23px;height:23px;border-right-width:1"></div>
<div class="btn" style="left:474px;top:265px;width:23px;height:23px;border-right-width:1"></div>
<div class="btn" style="left:499px;top:265px;width:23px;height:23px;border-right-width:1"></div>
<div class="btn" style="left:524px;top:265px;width:23px;height:23px;border-right-width:1"></div>
<div class="btn" style="left:549px;top:265px;width:23px;height:23px;border-right-width:1"></div>
<div class="btn" style="left:574px;top:265px;width:23px;height:23px;border-right-width:1"></div>
<div class="btn" style="left:599px;top:265px;width:8px;height:23px;border-right-width:0"></div>
<svg class="a" style="left:289px;top:265px" width="23" height="23" viewBox="0 0 23 23"><path d="M11.5 5.500V17.500M5.500 11.500H17.500" stroke="#000" stroke-width="3.400"/></svg>
<svg class="a" style="left:314px;top:265px" width="23" height="23" viewBox="0 0 23 23"><path d="M5.500 11.500H17.500" stroke="#000" stroke-width="3.200"/></svg>
<svg class="a" style="left:339px;top:265px" width="23" height="23" viewBox="0 0 23 23"><path d="M7 7L16 16M16 7L7 16" stroke="#000" stroke-width="3.200"/></svg>
<svg class="a" style="left:364px;top:265px" width="23" height="23" viewBox="0 0 23 23"><path d="M5.500 11.500H17.500" stroke="#000" stroke-width="2.600"/><circle cx="11.500" cy="6.300" r="1.900"/><circle cx="11.500" cy="16.700" r="1.900"/></svg>
<svg class="a" style="left:389px;top:265px" width="23" height="23" viewBox="0 0 23 23"><text x="5" y="16" font-family="Liberation Serif,serif" font-weight="bold" font-size="10">x</text><text x="11" y="12" font-family="Liberation Serif,serif" font-weight="bold" font-size="10">y</text></svg>
<svg class="a" style="left:414px;top:265px" width="23" height="23" viewBox="0 0 23 23"><text x="5" y="10.500" font-family="Liberation Serif,serif" font-weight="bold" font-size="9">y</text><path d="M6.500 13L8.500 16.500L12.500 6.500" stroke="#000" fill="none" stroke-width="1.100"/><path d="M12 9.500H18.500" stroke="#000" stroke-width="1.200"/><text x="12.500" y="17" font-family="Liberation Serif,serif" font-weight="bold" font-size="10">x</text></svg>
<svg class="a" style="left:439px;top:265px" width="23" height="23" viewBox="0 0 23 23"><path d="M4 8H10M7 5V11" stroke="#000" stroke-width="1.8"/><path d="M17 5L7 17" stroke="#000" stroke-width="1.6"/><path d="M12 15.5H19" stroke="#000" stroke-width="2"/></svg>
<svg class="a" style="left:474px;top:265px" width="23" height="23" viewBox="0 0 23 23"><text x="3.500" y="16.500" font-family="Liberation Sans,sans-serif" font-weight="bold" font-size="14" stroke="#000" stroke-width="0.400">t=</text></svg>
<svg class="a" style="left:499px;top:265px" width="23" height="23" viewBox="0 0 23 23"><path d="M6 14.500L11.500 9L17 14.500" stroke="#000" stroke-width="3" fill="none"/></svg>
<svg class="a" style="left:524px;top:265px" width="23" height="23" viewBox="0 0 23 23"><circle cx="10.500" cy="9.500" r="4.200" stroke="#000" stroke-width="2.200" fill="none"/><path d="M5.500 16.500Q12 18 15 11.500M14 15.500L18.500 17" stroke="#000" stroke-width="1.700" fill="none"/></svg>
<svg class="a" style="left:549px;top:265px" width="23" height="23" viewBox="0 0 23 23"><path d="M16.500 9.500A5 4.500 0 0 0 7.500 8M6.500 13.500A5 4.500 0 0 0 15.500 15" stroke="#000" stroke-width="2.400" fill="none"/><path d="M4.500 7L11 7.500L7 12ZM18.500 16L12 15.500L16 11Z" fill="#000"/></svg>
<svg class="a" style="left:574px;top:265px" width="23" height="23" viewBox="0 0 23 23"><path d="M8 9A5.200 5.200 0 1 0 15 9" stroke="#000" stroke-width="2.200" fill="none"/><path d="M11.500 3.500L16.500 9.500H13.500V15H9.500V9.500H6.500Z" fill="#000"/></svg>
<svg class="a" style="left:599px;top:265px" width="23" height="23" viewBox="0 0 23 23"><path d="M4 6.500L7 8.500M4 17.500L7 15.500" stroke="#000" stroke-width="2.200"/></svg>
<div class="a" style="left:272px;top:290px;width:336px;height:92px;background:#e9e7e4;border:1px solid #808080;border-right:0"></div>
<div class="a" style="left:373px;top:321px;width:204px;height:39px;border:2px solid #1a9fd4"></div>
<div class="a" style="left:378px;top:326px;width:87px;height:30px;border:1px solid #dcdad6"></div>
<div class="a" style="left:382px;top:330px;width:44px;height:22px;border:1px solid #dcdad6"></div>
<div class="a" style="left:441px;top:330px;width:20px;height:22px;border:1px solid #dcdad6"></div>
<div class="a" style="left:483px;top:326px;width:90px;height:30px;border:1px solid #dcdad6"></div>
<div class="a" style="left:487px;top:330px;width:47px;height:22px;border:1px solid #dcdad6"></div>
<div class="a" style="left:549px;top:330px;width:20px;height:22px;border:1px solid #dcdad6"></div>
<div class="t" style="left:384px;top:331px;transform:scaleX(0.906);transform-origin:0 0;font-size:16px;line-height:20px;height:20px;font-style:italic">height</div>
<div class="t" style="left:429.5px;top:332.5px;transform:scaleX(0.803);transform-origin:0 0;font-size:16px;line-height:20px;height:20px">&lt;</div>
<div class="t" style="left:443px;top:331px;transform:scaleX(0.899);transform-origin:0 0;font-size:16px;line-height:20px;height:20px">60</div>
<div class="t" style="left:468px;top:331px;transform:scaleX(1.078);transform-origin:0 0;font-size:16px;line-height:20px;height:20px">&amp;</div>
<div class="t" style="left:489px;top:331px;transform:scaleX(0.886);transform-origin:0 0;font-size:16px;line-height:20px;height:20px;font-style:italic">weight</div>
<div class="t" style="left:537.5px;top:332.5px;transform:scaleX(0.803);transform-origin:0 0;font-size:16px;line-height:20px;height:20px">&lt;</div>
<div class="t" style="left:551px;top:331px;transform:scaleX(0.899);transform-origin:0 0;font-size:16px;line-height:20px;height:20px">90</div>
<div class="btn" style="left:272px;top:383px;width:15px;height:15px;"></div>
<div class="arr" style="left:276.5px;top:386.5px;border-color:transparent #909090 transparent transparent;border-width:3.5px 4px 3.5px 0"></div>
<div class="btn" style="left:432px;top:402px;width:60px;height:21px;"></div>
<div class="t mono" style="left:456px;top:405px;">OK</div>
<div class="btn" style="left:496px;top:402px;width:60px;height:21px;"></div>
<div class="t mono" style="left:507.5px;top:405px;">Cancel</div>
<div class="btn" style="left:560px;top:402px;width:47px;height:21px;border-right:0;box-shadow:none"></div>
<div class="t mono" style="left:574px;top:405px;">Apply</div>
<div class="a" style="left:0px;top:424px;width:607px;height:1px;background:#d4d0c8"></div>
<div class="a" style="left:0px;top:425px;width:607px;height:16px;background:#eceae6"></div>
<div class="btn" style="left:-10px;top:425px;width:13px;height:16px;"></div>
<div class="btn" style="left:3px;top:425px;width:520px;height:16px;"></div>
<div class="btn" style="left:590px;top:425px;width:16px;height:16px;"></div>
<svg class="a" style="left:590px;top:425px" width="16" height="16" viewBox="0 0 16 16"><path d="M15 2L2 15M15 6L6 15M15 10L10 15" stroke="#808080" stroke-width="1.2"/><path d="M3 3L7 6.5L3 10Z" fill="#000"/></svg>
</body></html>
